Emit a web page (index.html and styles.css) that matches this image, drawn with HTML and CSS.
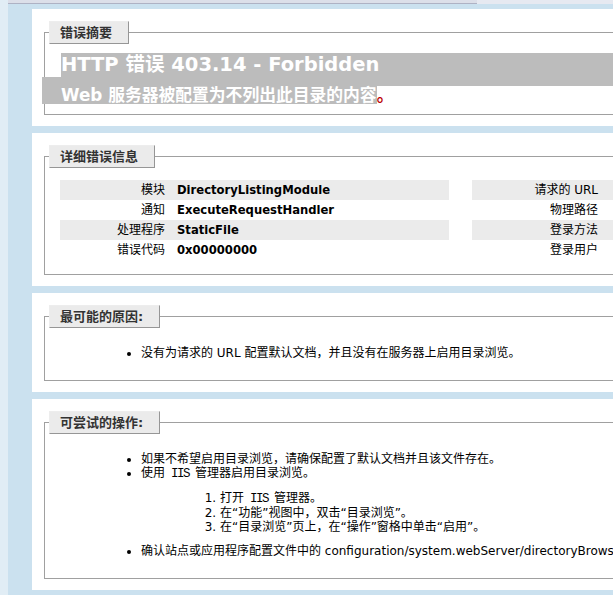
FILE: index.html
```html
<!DOCTYPE html>
<html lang="zh-CN">
<head>
<meta charset="utf-8">
<title>IIS 详细错误 - 403.14 - Forbidden</title>
<link rel="stylesheet" href="styles.css">
</head>
<body>
<div class="topbar"><div class="topbar-line"></div></div>
<div class="content">
  <div class="box first">
    <fieldset>
      <legend>错误摘要</legend>
      <h1>HTTP 错误 403.14 - Forbidden</h1>
      <h2><span class="sel">Web 服务器被配置为不列出此目录的内容</span><span class="dot">。</span></h2>
    </fieldset>
  </div>

  <div class="box">
    <fieldset>
      <legend>详细错误信息</legend>
      <div class="details">
        <table class="left">
          <tr class="alt"><th>模块</th><td>DirectoryListingModule</td></tr>
          <tr><th>通知</th><td>ExecuteRequestHandler</td></tr>
          <tr class="alt"><th>处理程序</th><td>StaticFile</td></tr>
          <tr><th>错误代码</th><td>0x00000000</td></tr>
        </table>
        <table class="right">
          <tr class="alt"><th>请求的 URL</th><td></td></tr>
          <tr><th>物理路径</th><td></td></tr>
          <tr class="alt"><th>登录方法</th><td></td></tr>
          <tr><th>登录用户</th><td></td></tr>
        </table>
      </div>
    </fieldset>
  </div>

  <div class="box">
    <fieldset>
      <legend>最可能的原因:</legend>
      <ul>
        <li>没有为请求的 URL 配置默认文档，并且没有在服务器上启用目录浏览。</li>
      </ul>
    </fieldset>
  </div>

  <div class="box last">
    <fieldset>
      <legend>可尝试的操作:</legend>
      <ul>
        <li>如果不希望启用目录浏览，请确保配置了默认文档并且该文件存在。</li>
        <li>使用<span class="ss"> IIS </span>管理器启用目录浏览。
          <ol>
            <li>打开<span class="ss"> IIS </span>管理器。</li>
            <li>在“功能”视图中，双击“目录浏览”。</li>
            <li>在“目录浏览”页上，在“操作”窗格中单击“启用”。</li>
          </ol>
        </li>
        <li>确认站点或应用程序配置文件中的 configuration/system.webServer/directoryBrowse@enabled 特性被设置为 true。</li>
      </ul>
    </fieldset>
  </div>
</div>
</body>
</html>
```

FILE: styles.css
```css
html {
  overflow: hidden;
}

body {
  margin: 0;
  width: 1300px;
  min-height: 595px;
  background: #cbe1ef;
  border-left: 8px solid #e1edf5;
  font-family: "DejaVu Sans", "Noto Sans CJK SC", sans-serif;
  font-size: 12px;
  line-height: 14px;
  color: #000;
}

.topbar {
  height: 4px;
  background: #e6e9f1;
}

.topbar-line {
  width: 469px;
  height: 3px;
  background: #dcdfe9;
  border-bottom: 1px solid #aeb2c4;
}

.content {
  padding-left: 24px;
}

.box {
  background: #fff;
  margin-top: 7px;
  padding: 12px 12px 11px 12px;
  width: 1180px;
}

.box.first {
  margin-top: 5px;
}

fieldset {
  margin: 0;
  padding: 8px 15px 10px 15px;
  border: 1px solid #a0a0a0;
  min-inline-size: 0;
}

legend {
  margin-left: -11px;
  padding: 4px 16px 4px 10px;
  border-top: 1px solid #ededed;
  border-left: 1px solid #ededed;
  border-right: 1px solid #969696;
  border-bottom: 1px solid #969696;
  background: #ebebeb;
  color: #333;
  font-weight: bold;
  font-size: 13px;
  line-height: 13px;
}

h1 {
  margin: 1px 0 0 1px;
  padding-bottom: 9px;
  font-size: 19.5px;
  line-height: 24px;
  font-weight: bold;
  color: #fff;
  background: #bcbcbc;
}

h2 {
  margin: 0;
  font-size: 16.8px;
  line-height: 18px;
  font-weight: bold;
}

.sel {
  display: inline-block;
  background: #bcbcbc;
  color: #fff;
  padding: 9px 0 0 19px;
  margin: -9px 0 0 -18px;
}

.dot {
  color: #b00;
}

.details {
  display: flex;
  gap: 23px;
  margin: 4px 0;
}

table {
  border-spacing: 0;
}

table.left {
  width: 389px;
}

table.right {
  width: 700px;
}

th {
  font-weight: normal;
  text-align: right;
  vertical-align: top;
  white-space: nowrap;
  padding: 3px 12px 3px 0;
}

.left th {
  width: 105px;
}

.right th {
  width: 126px;
  padding-right: 14px;
}

td {
  padding: 3px 0;
  font-size: 11.6px;
  font-weight: bold;
  text-align: left;
  vertical-align: top;
  white-space: nowrap;
}

tr.alt {
  background: #ebebeb;
}

ul,
ol {
  margin: 10px 0 10px 41px;
  padding-left: 40px;
}

ol {
  margin-left: 39px;
}

.ss {
  font-family: "Liberation Mono", monospace;
  font-size: 12.5px;
  letter-spacing: -1.5px;
}
```
